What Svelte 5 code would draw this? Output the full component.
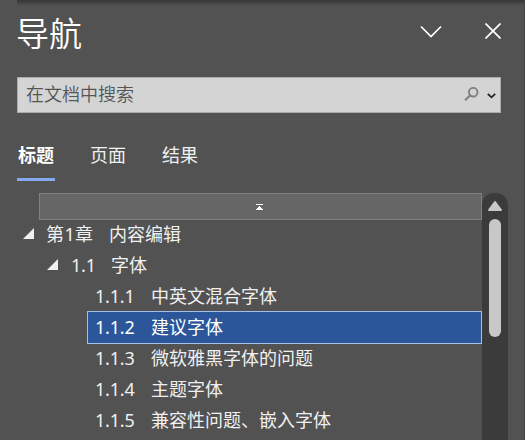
<script>
    let tabs = ["标题", "页面", "结果"]
    let activeTab = $state(0)
    let selected = $state("1.1.2")

    const headings = [
        { level: 1, number: "第1章", text: "内容编辑", open: true },
        { level: 2, number: "1.1", text: "字体", open: true },
        { level: 3, number: "1.1.1", text: "中英文混合字体" },
        { level: 3, number: "1.1.2", text: "建议字体" },
        { level: 3, number: "1.1.3", text: "微软雅黑字体的问题" },
        { level: 3, number: "1.1.4", text: "主题字体" },
        { level: 3, number: "1.1.5", text: "兼容性问题、嵌入字体" },
    ]
</script>

<div class="pane">
    <div class="top-shadow"></div>

    <header>
        <h1>导航</h1>
        <button class="menu" aria-label="选项">
            <svg width="22" height="14" viewBox="0 0 22 14">
                <path d="M1 1.5L11 11.5L21 1.5" fill="none" stroke="#fff" stroke-width="1.7"/>
            </svg>
        </button>
        <button class="close" aria-label="关闭">
            <svg width="16" height="16" viewBox="0 0 16 16">
                <path d="M.5 .5L15.5 15.5M15.5 .5L.5 15.5" stroke="#fff" stroke-width="1.7"/>
            </svg>
        </button>
    </header>

    <div class="search">
        <span class="placeholder">在文档中搜索</span>
        <svg class="glass" width="15" height="14" viewBox="0 0 15 14">
            <circle cx="9.2" cy="5.2" r="4.3" fill="none" stroke="#808080" stroke-width="1.9"/>
            <path d="M6.2 8.2L1 13.2" stroke="#808080" stroke-width="2.2"/>
        </svg>
        <svg class="drop" width="9" height="6" viewBox="0 0 9 6">
            <path d="M.8 .8L4.5 4.3L8.2 .8" fill="none" stroke="#222" stroke-width="1.8"/>
        </svg>
    </div>

    <nav>
        {#each tabs as tab, i}
            <button class:active={activeTab === i} onclick={() => (activeTab = i)}>{tab}</button>
        {/each}
    </nav>

    <div class="content">
        <div class="tree">
            <button class="jump-top" aria-label="跳转到开头">
                <svg width="7" height="6" viewBox="0 0 7 6" shape-rendering="crispEdges">
                    <path d="M0 0H7V1H0ZM3 2H4V3H5V4H6V5H7V6H0V5H1V4H2V3H3Z" fill="#fff"/>
                </svg>
            </button>
            {#each headings as h}
                <button
                    class="row level{h.level}"
                    class:selected={selected === h.number}
                    onclick={() => (selected = h.number)}
                >
                    {#if h.open}
                        <svg class="caret" width="11" height="11" viewBox="0 0 11 11">
                            <path d="M11 0V11H0Z" fill="#f0f0f0"/>
                        </svg>
                    {/if}
                    <span class="number">{h.number}</span>
                    <span class="text">{h.text}</span>
                </button>
            {/each}
        </div>
        <div class="scrollbar">
            <svg width="14" height="10" viewBox="0 0 14 10">
                <path d="M7 1L13 9H1Z" fill="#c8c8c8" stroke="#c8c8c8" stroke-width="2" stroke-linejoin="round"/>
            </svg>
            <div class="thumb"></div>
        </div>
    </div>
</div>

<style>
    :global(body) {
        overflow: hidden;
    }

    .pane {
        position: relative;
        box-sizing: border-box;
        width: 525px;
        height: 440px;
        padding-left: 17px;
        overflow: hidden;
        border-right: 1px solid #464646;
        background: #525252;
        color: #f0f0f0;
        font: 18px/31px "Noto Sans", "Noto Sans CJK SC", sans-serif;
    }

    .top-shadow {
        position: absolute;
        top: 0;
        left: 17px;
        right: 0;
        height: 6px;
        background: linear-gradient(#353535, #525252);
    }

    button {
        margin: 0;
        padding: 0;
        border: 0;
        background: none;
        color: inherit;
        font: inherit;
        text-align: left;
    }

    svg {
        display: block;
    }

    header {
        display: flex;
        align-items: flex-start;
        height: 77px;
    }

    h1 {
        flex: 1;
        margin: 11px 0 0 -1px;
        color: #fff;
        font-size: 33px;
        font-weight: 350;
        line-height: 45px;
    }

    .menu {
        margin: 25px 43px 0 0;
    }

    .close {
        margin: 23px 23px 0 0;
    }

    .search {
        display: flex;
        align-items: center;
        box-sizing: border-box;
        width: 484px;
        height: 36px;
        padding: 0 4px 2px 8px;
        border: 1px solid #ababab;
        background: #d4d4d4;
        color: #555;
    }

    .placeholder {
        flex: 1;
        font-weight: 350;
    }

    .glass {
        margin-right: 8px;
    }

    .drop {
        margin-top: 3px;
    }

    nav {
        display: flex;
        gap: 34px;
        height: 41px;
        margin-top: 27px;
    }

    nav button {
        box-sizing: border-box;
        width: 38px;
        height: 41px;
        padding-bottom: 7px;
        padding-left: 1px;
        border-bottom: 3px solid transparent;
    }

    nav button.active {
        border-color: #85a9ee;
        color: #fff;
        font-weight: 700;
    }

    .content {
        display: flex;
        height: 247px;
        margin-top: 12px;
    }

    .tree {
        display: flex;
        flex-direction: column;
        width: 465px;
    }

    .jump-top {
        display: flex;
        flex: none;
        align-items: center;
        justify-content: center;
        box-sizing: border-box;
        height: 27px;
        margin-left: 22px;
        margin-bottom: -1px;
        padding-right: 2px;
        border: 1px solid #808080;
        background: #666;
    }

    .row {
        display: flex;
        flex: none;
        align-items: center;
        box-sizing: border-box;
        height: 31px;
        white-space: nowrap;
    }

    .level1 {
        padding-left: 6px;
    }

    .level2 {
        padding-left: 30px;
    }

    .level3 {
        margin-left: 70px;
        padding-left: 8px;
    }

    .selected {
        height: 33px;
        margin-top: -1px;
        margin-bottom: -1px;
        padding-left: 7px;
        border: 1px solid #a5bfea;
        background: #2b579a;
        color: #fff;
    }

    .caret {
        margin: 0 12px 2px 0;
    }

    .number {
        letter-spacing: -0.2px;
    }

    .level1 .number {
        width: 63px;
        letter-spacing: 0.4px;
    }

    .level2 .caret {
        margin-right: 13px;
    }

    .level2 .number {
        width: 40px;
    }

    .level3 .number {
        width: 56px;
    }

    .scrollbar {
        display: flex;
        flex-direction: column;
        align-items: center;
        box-sizing: border-box;
        width: 26px;
        padding-top: 8px;
        border-radius: 12px 12px 0 0;
        background: #3b3b3b;
    }

    .thumb {
        width: 12px;
        height: 118px;
        margin-top: 8px;
        border-radius: 6px;
        background: #c8c8c8;
    }
</style>
